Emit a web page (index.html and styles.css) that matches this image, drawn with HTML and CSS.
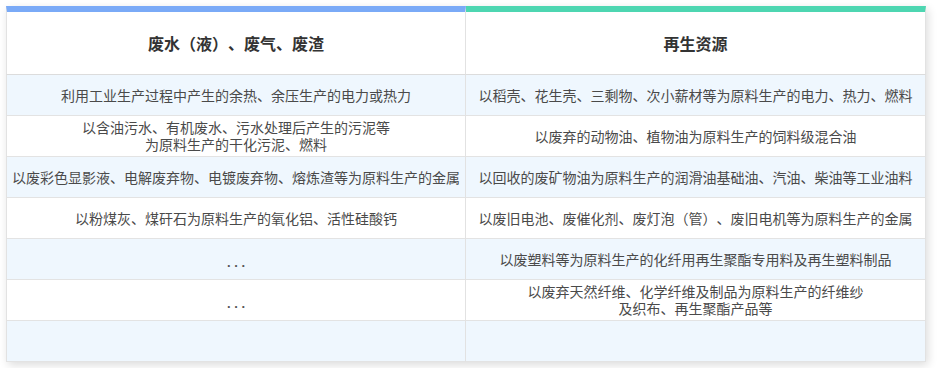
FILE: index.html
```html
<!DOCTYPE html>
<html lang="zh-CN">
<head>
<meta charset="utf-8">
<title>资源综合利用</title>
<link rel="stylesheet" href="styles.css">
</head>
<body>
<div class="card">
  <div class="th th-left">废水（液）、废气、废渣</div>
  <div class="th th-right">再生资源</div>

  <div class="td left stripe">利用工业生产过程中产生的余热、余压生产的电力或热力</div>
  <div class="td right stripe">以稻壳、花生壳、三剩物、次小薪材等为原料生产的电力、热力、燃料</div>

  <div class="td left">以含油污水、有机废水、污水处理后产生的污泥等<br>为原料生产的干化污泥、燃料</div>
  <div class="td right">以废弃的动物油、植物油为原料生产的饲料级混合油</div>

  <div class="td left stripe">以废彩色显影液、电解废弃物、电镀废弃物、熔炼渣等为原料生产的金属</div>
  <div class="td right stripe">以回收的废矿物油为原料生产的润滑油基础油、汽油、柴油等工业油料</div>

  <div class="td left">以粉煤灰、煤矸石为原料生产的氧化铝、活性硅酸钙</div>
  <div class="td right">以废旧电池、废催化剂、废灯泡（管）、废旧电机等为原料生产的金属</div>

  <div class="td left stripe"><span class="dots">. . .</span></div>
  <div class="td right stripe">以废塑料等为原料生产的化纤用再生聚酯专用料及再生塑料制品</div>

  <div class="td left"><span class="dots">. . .</span></div>
  <div class="td right">以废弃天然纤维、化学纤维及制品为原料生产的纤维纱<br>及织布、再生聚酯产品等</div>

  <div class="td left stripe"></div>
  <div class="td right stripe"></div>
</div>
</body>
</html>
```

FILE: styles.css
```css
html, body {
  margin: 0;
  padding: 0;
  background: #ffffff;
}

body {
  padding: 6px;
  font-family: "Noto Sans CJK SC", "Noto Sans", sans-serif;
  color: #4a4a4a;
  text-spacing-trim: space-all;
  font-feature-settings: "chws" 0, "halt" 0, "palt" 0;
}

.card {
  width: 920px;
  display: grid;
  grid-template-columns: 460px 460px;
  background: #ffffff;
  box-shadow: 2px 3px 9px rgba(0, 0, 0, 0.14);
}

.th {
  box-sizing: border-box;
  height: 69px;
  display: flex;
  align-items: center;
  justify-content: center;
  font-size: 16px;
  font-weight: bold;
  color: #333;
  border-bottom: 1px solid #dcdcdc;
}

.th-left {
  border-top: 6px solid #7aaaf7;
  border-left: 1px solid #e2e2e2;
  border-right: 1px solid #e2e2e2;
}

.th-right {
  border-top: 6px solid #4dd6b1;
  border-right: 1px solid #e2e2e2;
}

.td {
  box-sizing: border-box;
  height: 41px;
  display: flex;
  align-items: center;
  justify-content: center;
  text-align: center;
  font-size: 14px;
  line-height: 17px;
  border-bottom: 1px solid #e3e3e3;
  white-space: nowrap;
}

.left {
  border-left: 1px solid #e2e2e2;
  border-right: 1px solid #e2e2e2;
}

.right {
  border-right: 1px solid #e2e2e2;
}

.stripe {
  background: #eff7fe;
}

.dots {
  font-family: "Liberation Sans", sans-serif;
  font-weight: bold;
  color: #555;
  font-size: 13px;
  position: relative;
  top: 3px;
}
```
